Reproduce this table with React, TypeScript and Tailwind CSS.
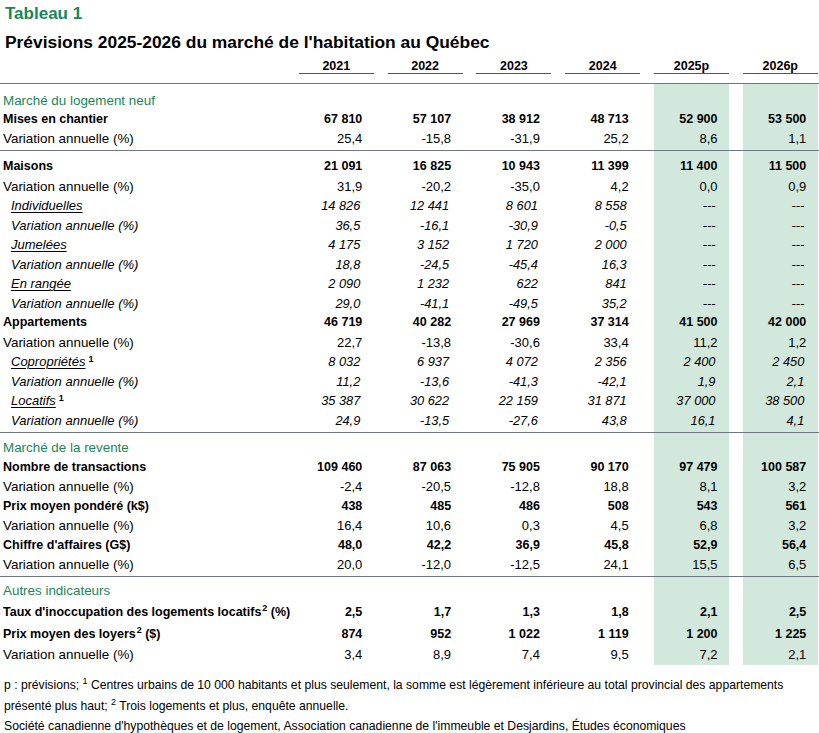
import React from "react";

type Kind = "head" | "bold" | "reg" | "ital";

const grid = "grid grid-cols-[285px_repeat(6,75px)] gap-x-[13.8px]";
const fill = "bg-[#d2e8dc]";

function Row({
  label,
  values = ["", "", "", "", "", ""],
  kind = "reg",
  h,
}: {
  label?: React.ReactNode;
  values?: string[];
  kind?: Kind;
  h: string;
}) {
  const labelCls =
    kind === "head"
      ? "pl-[3px] text-[13.4px] text-[#16885a]"
      : kind === "bold"
      ? "pl-[3px] text-[12.5px] font-bold"
      : kind === "ital"
      ? "pl-[11px] text-[13px] italic"
      : "pl-[3px] text-[13.4px]";
  const numCls =
    kind === "bold"
      ? "pr-[11.5px] text-[12.5px] font-bold"
      : kind === "ital"
      ? "pr-[13.5px] text-[12.8px] italic"
      : "pr-[11.5px] text-[13px]";
  return (
    <div className={`${grid} ${h}`}>
      <div className={`flex items-center whitespace-nowrap ${labelCls}`}>
        <span>{label}</span>
      </div>
      {values.map((v, i) => (
        <div
          key={i}
          className={`flex items-center justify-end whitespace-nowrap ${numCls} ${
            i >= 4 ? fill : ""
          }`}
        >
          {v}
        </div>
      ))}
    </div>
  );
}

function Line() {
  return <div className="h-px w-full bg-[#6f7683]" />;
}

function Sub({ n, gap = true }: { n: string; gap?: boolean }) {
  return (
    <sup className={`${gap ? "ml-[3px]" : "ml-px"} text-[9px] font-bold not-italic`}>
      {n}
    </sup>
  );
}

const U = ({ children }: { children: React.ReactNode }) => (
  <span className="underline underline-offset-2 decoration-1">{children}</span>
);

const VAR = "Variation annuelle (%)";
const D = "---";

export default function App() {
  const years = ["2021", "2022", "2023", "2024", "2025p", "2026p"];
  return (
    <div className="w-[819px] h-[733px] overflow-hidden bg-white text-black font-['Liberation_Sans',Arial,sans-serif]">
      <div className="pt-[4px] pl-[5px] text-[17px] leading-[20px] font-bold text-[#16885a]">
        Tableau 1
      </div>
      <div className="mt-[8px] pl-[5px] text-[17.4px] leading-[20px] font-bold">
        Prévisions 2025-2026 du marché de l'habitation au Québec
      </div>
      <div className={`${grid} mt-[7px]`}>
        <div />
        {years.map((y) => (
          <div
            key={y}
            className="text-center text-[12.5px] leading-[14px] font-bold border-b border-[#0f7b4a]"
          >
            {y}
          </div>
        ))}
      </div>
      <div className="h-[9px]" />
      <Line />

      <Row h="h-[7px]" />
      <Row h="h-[19px]" kind="head" label="Marché du logement neuf" />
      <Row
        h="h-[19px]"
        kind="bold"
        label="Mises en chantier"
        values={["67 810", "57 107", "38 912", "48 713", "52 900", "53 500"]}
      />
      <Row
        h="h-[19px]"
        label={VAR}
        values={["25,4", "-15,8", "-31,9", "25,2", "8,6", "1,1"]}
      />
      <Row h="h-[2px]" />
      <Line />

      <Row h="h-[6px]" />
      <Row
        h="h-[19.5px]"
        kind="bold"
        label="Maisons"
        values={["21 091", "16 825", "10 943", "11 399", "11 400", "11 500"]}
      />
      <Row
        h="h-[19.5px]"
        label={VAR}
        values={["31,9", "-20,2", "-35,0", "4,2", "0,0", "0,9"]}
      />
      <Row
        h="h-[19.5px]"
        kind="ital"
        label={<U>Individuelles</U>}
        values={["14 826", "12 441", "8 601", "8 558", D, D]}
      />
      <Row
        h="h-[19.5px]"
        kind="ital"
        label={VAR}
        values={["36,5", "-16,1", "-30,9", "-0,5", D, D]}
      />
      <Row
        h="h-[19.5px]"
        kind="ital"
        label={<U>Jumelées</U>}
        values={["4 175", "3 152", "1 720", "2 000", D, D]}
      />
      <Row
        h="h-[19.5px]"
        kind="ital"
        label={VAR}
        values={["18,8", "-24,5", "-45,4", "16,3", D, D]}
      />
      <Row
        h="h-[19.5px]"
        kind="ital"
        label={<U>En rangée</U>}
        values={["2 090", "1 232", "622", "841", D, D]}
      />
      <Row
        h="h-[19.5px]"
        kind="ital"
        label={VAR}
        values={["29,0", "-41,1", "-49,5", "35,2", D, D]}
      />
      <Row
        h="h-[19.5px]"
        kind="bold"
        label="Appartements"
        values={["46 719", "40 282", "27 969", "37 314", "41 500", "42 000"]}
      />
      <Row
        h="h-[19.5px]"
        label={VAR}
        values={["22,7", "-13,8", "-30,6", "33,4", "11,2", "1,2"]}
      />
      <Row
        h="h-[19.5px]"
        kind="ital"
        label={
          <>
            <U>Copropriétés</U>
            <Sub n="1" />
          </>
        }
        values={["8 032", "6 937", "4 072", "2 356", "2 400", "2 450"]}
      />
      <Row
        h="h-[19.5px]"
        kind="ital"
        label={VAR}
        values={["11,2", "-13,6", "-41,3", "-42,1", "1,9", "2,1"]}
      />
      <Row
        h="h-[19.5px]"
        kind="ital"
        label={
          <>
            <U>Locatifs</U>
            <Sub n="1" />
          </>
        }
        values={["35 387", "30 622", "22 159", "31 871", "37 000", "38 500"]}
      />
      <Row
        h="h-[19.5px]"
        kind="ital"
        label={VAR}
        values={["24,9", "-13,5", "-27,6", "43,8", "16,1", "4,1"]}
      />
      <Row h="h-[2px]" />
      <Line />

      <Row h="h-[5px]" />
      <Row h="h-[19.5px]" kind="head" label="Marché de la revente" />
      <Row
        h="h-[19.5px]"
        kind="bold"
        label="Nombre de transactions"
        values={["109 460", "87 063", "75 905", "90 170", "97 479", "100 587"]}
      />
      <Row
        h="h-[19.5px]"
        label={VAR}
        values={["-2,4", "-20,5", "-12,8", "18,8", "8,1", "3,2"]}
      />
      <Row
        h="h-[19.5px]"
        kind="bold"
        label="Prix moyen pondéré (k$)"
        values={["438", "485", "486", "508", "543", "561"]}
      />
      <Row
        h="h-[19.5px]"
        label={VAR}
        values={["16,4", "10,6", "0,3", "4,5", "6,8", "3,2"]}
      />
      <Row
        h="h-[19.5px]"
        kind="bold"
        label="Chiffre d'affaires (G$)"
        values={["48,0", "42,2", "36,9", "45,8", "52,9", "56,4"]}
      />
      <Row
        h="h-[19.5px]"
        label={VAR}
        values={["20,0", "-12,0", "-12,5", "24,1", "15,5", "6,5"]}
      />
      <Row h="h-[1.5px]" />
      <Line />

      <Row h="h-[4px]" />
      <Row h="h-[20px]" kind="head" label="Autres indicateurs" />
      <Row
        h="h-[22px]"
        kind="bold"
        label={
          <>
            Taux d'inoccupation des logements locatifs
            <Sub n="2" gap={false} />
            {" (%)"}
          </>
        }
        values={["2,5", "1,7", "1,3", "1,8", "2,1", "2,5"]}
      />
      <Row
        h="h-[22px]"
        kind="bold"
        label={
          <>
            Prix moyen des loyers
            <Sub n="2" gap={false} />
            {" ($)"}
          </>
        }
        values={["874", "952", "1 022", "1 119", "1 200", "1 225"]}
      />
      <Row
        h="h-[19.5px]"
        label={VAR}
        values={["3,4", "8,9", "7,4", "9,5", "7,2", "2,1"]}
      />

      <div className="pt-[10px] pl-[4px] text-[12.2px] whitespace-nowrap">
        <p className="leading-[21px]">
          p : prévisions; <sup className="text-[9px]">1</sup> Centres urbains de
          10 000 habitants et plus seulement, la somme est légèrement inférieure
          au total provincial des appartements
          <br />
          présenté plus haut; <sup className="text-[9px]">2</sup> Trois logements
          et plus, enquête annuelle.
        </p>
        <p className="leading-[18px]">
          Société canadienne d'hypothèques et de logement, Association canadienne
          de l'immeuble et Desjardins, Études économiques
        </p>
      </div>
    </div>
  );
}
